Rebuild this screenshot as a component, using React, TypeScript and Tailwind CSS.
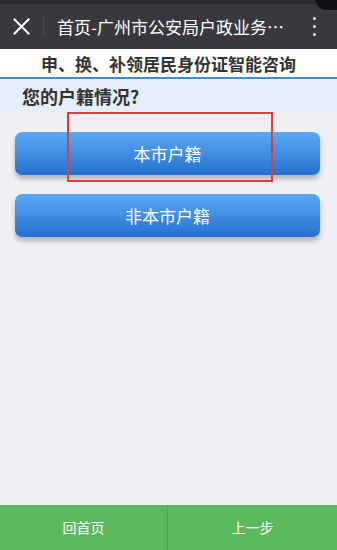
import React from "react";

export default function App() {
  const font = { fontFamily: '"Noto Sans CJK SC", "Noto Sans", sans-serif' };
  return (
    <div className="relative w-[337px] h-[550px] overflow-hidden bg-[#f0f0f4] flex flex-col" style={font}>
      {/* header */}
      <div className="relative h-[49px] bg-[#38383d] flex items-center shrink-0">
        <div className="absolute top-0 left-0 right-0 h-[4px] bg-[#2c2c30]" />
        <div className="absolute -top-[14px] -right-[12px] w-[34px] h-[24px] rounded-full bg-[#111]" />
        <div className="w-[43px] flex items-center justify-center pt-[4px]">
          <svg width="17" height="17" viewBox="0 0 17 17">
            <path d="M1.5 1.5 L15.5 15.5 M15.5 1.5 L1.5 15.5" stroke="#fff" strokeWidth="2" strokeLinecap="square" />
          </svg>
        </div>
        <div className="w-px h-[21px] bg-[#4a4a50] mt-[4px]" />
        <div className="ml-[13px] mt-[4px] text-white text-[17px] leading-none whitespace-nowrap flex-1">首页-广州市公安局户政业务…</div>
        <div className="w-[30px] mr-[8px] mt-[4px] flex flex-col items-center gap-[5px]">
          <div className="w-[3px] h-[3px] rounded-full bg-white" />
          <div className="w-[3px] h-[3px] rounded-full bg-white" />
          <div className="w-[3px] h-[3px] rounded-full bg-white" />
        </div>
      </div>
      {/* subtitle */}
      <div className="h-[30px] bg-white border-b-2 border-[#4a86c8] flex items-center justify-center shrink-0">
        <span className="text-[17px] font-bold text-[#333] leading-none">申、换、补领居民身份证智能咨询</span>
      </div>
      <div className="h-[33px] bg-[#e3eef9] flex items-center pl-[22px] shrink-0">
        <span className="text-[18px] font-bold text-[#333] leading-none">您的户籍情况?</span>
      </div>
      {/* buttons */}
      <div className="flex flex-col gap-[19px] pl-[15px] pr-[17px] pt-[20px] flex-1">
        <button className="h-[43px] rounded-[7px] bg-gradient-to-b from-[#5aaaf6] to-[#2670ce] text-white text-[17px] shadow-[0_4px_5px_rgba(0,0,0,0.25)]">本市户籍</button>
        <button className="h-[43px] rounded-[7px] bg-gradient-to-b from-[#5aaaf6] to-[#2670ce] text-white text-[17px] shadow-[0_4px_5px_rgba(0,0,0,0.25)]">非本市户籍</button>
      </div>
      {/* footer */}
      <div className="h-[45px] bg-[#5cb85c] flex shrink-0">
        <div className="w-[167px] flex items-center justify-center text-white text-[14px]">回首页</div>
        <div className="w-px bg-[#4fa94f]" />
        <div className="flex-1 flex items-center justify-center text-white text-[14px]">上一步</div>
      </div>
      {/* annotation */}
      <div className="absolute left-[67px] top-[112px] w-[206px] h-[70px] border-2 border-[#e53a3a]" />
    </div>
  );
}
